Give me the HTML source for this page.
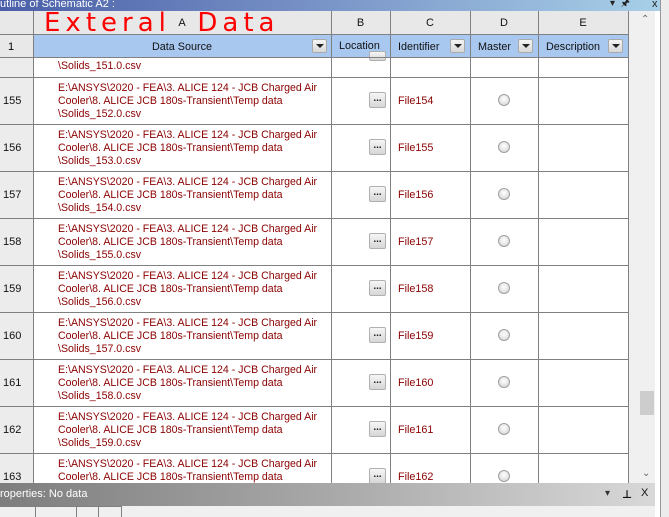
<!DOCTYPE html>
<html><head><meta charset="utf-8"><style>
*{margin:0;padding:0;box-sizing:border-box}
body{width:669px;height:517px;overflow:hidden;background:#fff;font-family:"Liberation Sans","DejaVu Sans",sans-serif;font-size:11px;position:relative}
.a{position:absolute}
.title{left:0;top:0;width:660px;height:11px;background:linear-gradient(90deg,#4a5fa8,#7a95c8 50%,#a8d0e8);color:#fff;font-size:11px;line-height:8px;overflow:hidden;padding-left:0}
.hl{background:#808080}
.hdr{top:11px;height:24px;background:#e8e8e8;text-align:center;line-height:24px;color:#111;font-size:11px}
.hdr2{top:35px;height:23px;background:#a9c8f0;line-height:25px;color:#111;font-size:10.8px;text-align:center}
.dd{position:absolute;top:4px;width:15px;height:14px;background:linear-gradient(#f4f4f4,#d8d8d8);border:1px solid #aaa;border-radius:2px}
.dd:after{content:"";position:absolute;left:3px;top:4px;border-left:4px solid transparent;border-right:4px solid transparent;border-top:4px solid #222}
.txt{color:#8b0000;font-size:10.6px;line-height:13px;left:58px;white-space:nowrap}
.btn{width:17px;height:16px;border:1px solid #b0b0b0;border-radius:2px;background:linear-gradient(#f6f6f6,#d6d6d6);font-size:10px;line-height:11px;text-align:center;font-weight:bold;color:#222}
.rad{width:12px;height:12px;border-radius:50%;border:1px solid #a0a0a0;background:radial-gradient(circle at 50% 40%,#fff,#d0d0d0)}
.file{color:#8b0000;font-size:10.8px;left:398px}
</style></head><body>
<div class="a title">utline of Schematic A2 :</div>
<div class="a" style="left:610px;top:0;font-size:10px;color:#222;line-height:8px">&#9662;&nbsp;&nbsp;&#x1F588;</div>
<div class="a" style="left:652px;top:-2px;font-size:11px;color:#222">x</div>
<div class="a" style="left:655px;top:11px;width:5px;height:506px;background:#fff"></div>
<div class="a" style="left:660px;top:0;width:1px;height:517px;background:#999"></div>
<div class="a" style="left:661px;top:0;width:8px;height:517px;background:#ececec"></div>
<div class="a" style="left:629px;top:11px;width:26px;height:472px;background:#f0f0f0"></div>
<div class="a" style="left:640px;top:391px;width:14px;height:24px;background:#cdcdcd"></div>
<div class="a" style="left:641px;top:14px;font-size:10px;color:#666">&#8963;</div>
<div class="a" style="left:642px;top:468px;font-size:10px;color:#666">&#8964;</div>
<div class="a hdr" style="left:0;width:33px"></div>
<div class="a hdr" style="left:33px;width:298px">A</div>
<div class="a hdr" style="left:331px;width:59px">B</div>
<div class="a hdr" style="left:390px;width:80px">C</div>
<div class="a hdr" style="left:470px;width:68px">D</div>
<div class="a hdr" style="left:538px;width:90px">E</div>
<div class="a" style="left:0;top:35px;width:33px;height:23px;background:#e8e8e8;line-height:25px;padding-left:8px;font-size:11px">1</div>
<div class="a hdr2" style="left:33px;width:298px">Data Source<span class="dd" style="left:279px"></span></div>
<div class="a hdr2" style="left:331px;width:59px;text-align:left;padding-left:8px;line-height:23px">Location</div>
<div class="a hdr2" style="left:390px;width:80px;text-align:left;padding-left:8px">Identifier<span class="dd" style="left:60px"></span></div>
<div class="a hdr2" style="left:470px;width:68px;text-align:left;padding-left:8px">Master<span class="dd" style="left:48px"></span></div>
<div class="a hdr2" style="left:538px;width:90px;text-align:left;padding-left:8px">Description<span class="dd" style="left:70px"></span></div>
<div class="a" style="left:44px;top:8px;font-family:'DejaVu Sans',sans-serif;font-size:26px;color:#f00;letter-spacing:5px;line-height:30px;font-weight:normal">Exteral &nbsp;Data</div>
<div class="a" style="left:0;top:58px;width:33px;height:425px;background:#ececec"></div>
<div class="a txt" style="top:60px">\Solids_151.0.csv</div>
<div class="a btn" style="left:369px;top:51px;height:10px"></div>
<div id="rows"></div>
<div class="a hl" style="left:0;top:34px;width:628px;height:1px"></div>
<div class="a hl" style="left:0;top:57px;width:628px;height:1px"></div>
<div class="a hl" style="left:33px;top:11px;width:1px;height:472px"></div>
<div class="a hl" style="left:331px;top:11px;width:1px;height:472px"></div>
<div class="a hl" style="left:390px;top:11px;width:1px;height:472px"></div>
<div class="a hl" style="left:470px;top:11px;width:1px;height:472px"></div>
<div class="a hl" style="left:538px;top:11px;width:1px;height:472px"></div>
<div class="a hl" style="left:628px;top:11px;width:1px;height:472px"></div>
<script>
var h='';
for(var i=0;i<9;i++){var t=77+47*i,n=155+i,s=152+i;
h+='<div class="a hl" style="left:0;top:'+t+'px;width:628px;height:1px"></div>';
h+='<div class="a" style="left:3px;top:'+(t+18)+'px;font-size:11px;color:#111">'+n+'</div>';
h+='<div class="a txt" style="top:'+(t+5)+'px">E:\\ANSYS\\2020 - FEA\\3. ALICE 124 - JCB Charged Air<br>Cooler\\8. ALICE JCB 180s-Transient\\Temp data<br>\\Solids_'+s+'.0.csv</div>';
h+='<div class="a btn" style="left:369px;top:'+(t+15)+'px">...</div>';
h+='<div class="a file" style="top:'+(t+18)+'px">File'+(n-1)+'</div>';
h+='<div class="a rad" style="left:498px;top:'+(t+17)+'px"></div>';}
document.getElementById('rows').innerHTML=h;
</script>
<div class="a" style="left:0;top:483px;width:655px;height:23px;background:linear-gradient(90deg,#7e7e7e,#a8a8a8 50%,#d8d8d8);color:#fff;font-size:11px;line-height:23px">roperties: No data</div>
<div class="a" style="left:605px;top:488px;font-size:10px;color:#333">&#9662;</div>
<div class="a" style="left:622px;top:488px;font-size:11px;color:#111;font-weight:bold">&#x22A5;</div>
<div class="a" style="left:641px;top:487px;font-size:11px;color:#111">X</div>
<div class="a" style="left:0;top:506px;width:655px;height:11px;background:#f0f0f0"></div>
<div class="a hl" style="left:0;top:506px;width:121px;height:1px"></div>
<div class="a hl" style="left:35px;top:506px;width:1px;height:11px"></div>
<div class="a hl" style="left:76px;top:506px;width:1px;height:11px"></div>
<div class="a hl" style="left:98px;top:506px;width:1px;height:11px"></div>
<div class="a hl" style="left:121px;top:506px;width:1px;height:11px"></div>
</body></html>
